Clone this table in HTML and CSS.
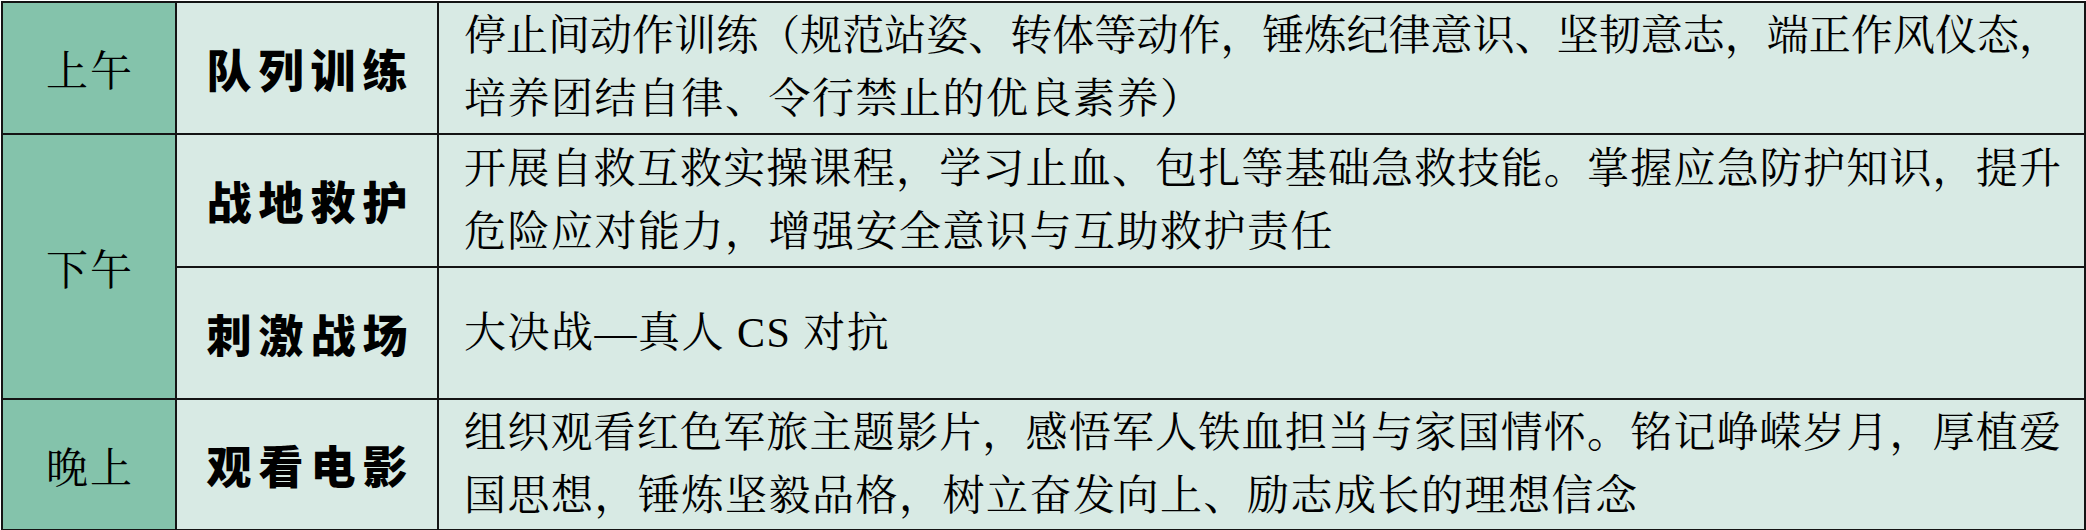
FILE: index.html
```html
<!DOCTYPE html>
<html lang="zh-CN">
<head>
<meta charset="utf-8">
<title>训练日程</title>
<link rel="stylesheet" href="styles.css">
</head>
<body>
<table class="schedule">
  <colgroup>
    <col class="c-period">
    <col class="c-topic">
    <col class="c-desc">
  </colgroup>
  <tr class="row-a">
    <td class="period">上午</td>
    <td class="topic"><span>队列训练</span></td>
    <td class="desc"><span class="ln full">停止间动作训练（规范站姿、转体等动作，锤炼纪律意识、坚韧意志，端正作风仪态，</span><span class="ln">培养团结自律、令行禁止的优良素养）</span></td>
  </tr>
  <tr class="row-b">
    <td class="period" rowspan="2">下午</td>
    <td class="topic"><span>战地救护</span></td>
    <td class="desc"><span class="ln full">开展自救互救实操课程，学习止血、包扎等基础急救技能。掌握应急防护知识，提升</span><span class="ln">危险应对能力，增强安全意识与互助救护责任</span></td>
  </tr>
  <tr class="row-c">
    <td class="topic"><span>刺激战场</span></td>
    <td class="desc"><span class="ln">大决战—真人 CS 对抗</span></td>
  </tr>
  <tr class="row-d">
    <td class="period">晚上</td>
    <td class="topic"><span>观看电影</span></td>
    <td class="desc"><span class="ln full">组织观看红色军旅主题影片，感悟军人铁血担当与家国情怀。铭记峥嵘岁月，厚植爱</span><span class="ln">国思想，锤炼坚毅品格，树立奋发向上、励志成长的理想信念</span></td>
  </tr>
</table>
</body>
</html>
```

FILE: styles.css
```css
html, body {
  margin: 0;
  padding: 0;
  background: #ffffff;
}

.schedule {
  border-collapse: collapse;
  table-layout: fixed;
  width: 2085px;
  margin: 1px 0 0 1px;
  color: #000;
}

.c-period { width: 174px; }
.c-topic { width: 262px; }
.c-desc { width: auto; }

.schedule td {
  border: 2px solid #141414;
  vertical-align: middle;
  padding: 0;
  background: #d8eae4;
}

.row-a { height: 132px; }
.row-b { height: 133px; }
.row-c { height: 132px; }
.row-d { height: 131px; }

.period {
  background: #84c3ab !important;
  text-align: center;
  font-family: "FangSong", "STFangsong", "Noto Serif CJK SC", "Noto Sans CJK SC", serif;
  font-size: 42px;
  letter-spacing: 2px;
  text-indent: 2px;
  line-height: 1;
}

.topic {
  text-align: center;
  font-family: "Noto Sans CJK SC", sans-serif;
  font-weight: 900;
  font-size: 45px;
  line-height: 1;
}

.topic span {
  letter-spacing: 7px;
  margin-right: -7px;
}

.desc {
  padding: 0 23px 0 25px !important;
  font-family: "Liberation Serif", "FangSong", "STFangsong", "Noto Serif CJK SC", "Noto Sans CJK SC", serif;
  font-size: 42px;
  line-height: 63px;
}

.ln {
  display: block;
  letter-spacing: 1.5px;
}

.ln.full {
  letter-spacing: 0;
  text-align: justify;
  text-align-last: justify;
}
```
